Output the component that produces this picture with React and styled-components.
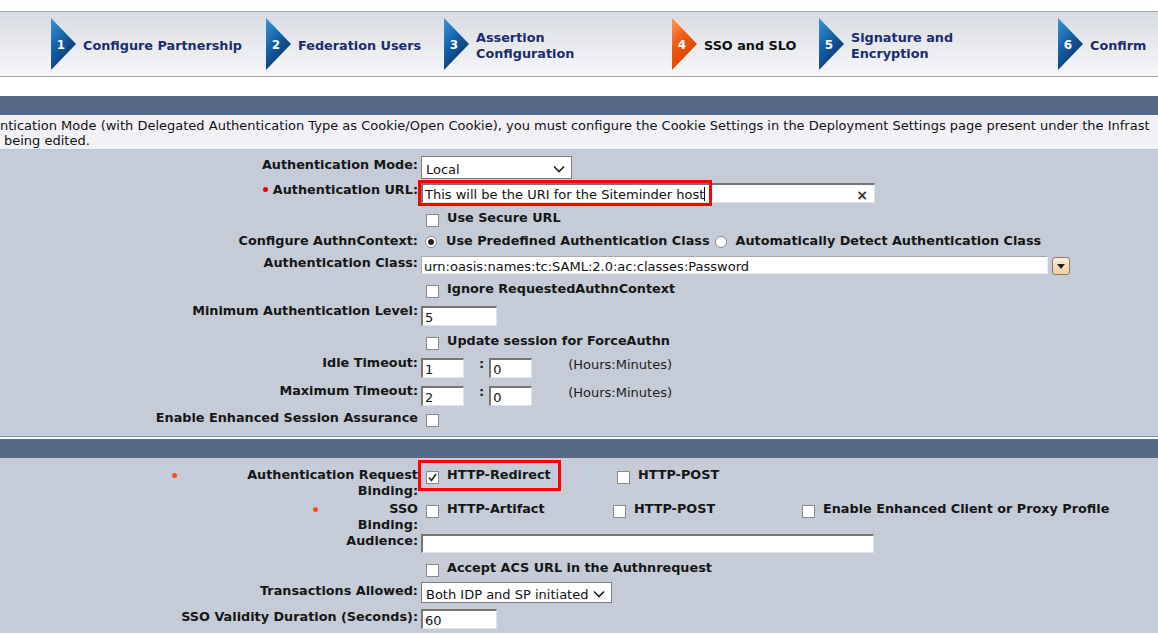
import React from 'react';
import styled, { createGlobalStyle } from 'styled-components';

const GlobalStyle = createGlobalStyle`
  html, body {
    margin: 0;
    padding: 0;
    background: #fff;
    overflow: hidden;
  }
  body {
    font-family: "DejaVu Sans", Verdana, sans-serif;
    font-size: 13px;
    color: #111;
  }
`;

const Page = styled.div`
  width: 1158px;
  height: 635px;
  overflow: hidden;
  padding-top: 11px;
  box-sizing: border-box;
`;

/* ---------- wizard steps ---------- */

const Stepper = styled.div`
  display: flex;
  align-items: center;
  height: 64px;
  padding-left: 51px;
  border-top: 1px solid #a3a7ae;
  border-bottom: 1px solid #a3a7ae;
  background: linear-gradient(#d8dbe2, #f6f7f9);
`;

const Step = styled.div`
  display: flex;
  align-items: center;
  flex-shrink: 0;
  width: ${p => (p.$w ? `${p.$w}px` : 'auto')};
`;

const StepText = styled.div`
  margin-left: 7px;
  padding-top: 4px;
  font-weight: bold;
  font-size: 12.8px;
  line-height: 16px;
  color: ${p => (p.$active ? '#111' : '#1d2b6f')};
`;

const StepArrow = ({ n, active }) => {
  const id = `grad-${n}`;
  return (
    <svg width="25" height="52" viewBox="0 0 25 52">
      <defs>
        <linearGradient id={id} x1="0" y1="0" x2="0.6" y2="1">
          {active ? (
            <>
              <stop offset="0" stopColor="#ff9a55" />
              <stop offset="0.45" stopColor="#f25a12" />
              <stop offset="1" stopColor="#d63a00" />
            </>
          ) : (
            <>
              <stop offset="0" stopColor="#3d95d8" />
              <stop offset="0.45" stopColor="#1565ad" />
              <stop offset="1" stopColor="#082f66" />
            </>
          )}
        </linearGradient>
      </defs>
      <polygon points="0,0 25,26 0,52" fill={`url(#${id})`} />
      <text x="10" y="31" textAnchor="middle" fill="#fff" fontSize="12" fontWeight="bold"
        fontFamily="DejaVu Sans, Verdana, sans-serif">{n}</text>
    </svg>
  );
};

/* ---------- sections ---------- */

const Gap = styled.div`
  height: ${p => p.$h}px;
  background: ${p => p.$bg || '#fff'};
`;

const SectionBar = styled.div`
  height: 19px;
  background: #566a88;
`;

const Info = styled.div`
  height: 35px;
  box-sizing: border-box;
  padding-top: 3px;
  background: #f1f1f6;
  border-bottom: 1px solid #b0c9e6;
  line-height: 15px;
  white-space: nowrap;
  overflow: hidden;
`;

const InfoLine = styled.div`
  padding-left: ${p => p.$indent || 0}px;
`;

const Panel = styled.div`
  background: #c5ccd7;
  padding-top: ${p => p.$pt || 0}px;
  border-bottom: ${p => (p.$divider ? '1px solid #8c929b' : 'none')};
`;

const Row = styled.div`
  display: grid;
  grid-template-columns: 421px 1fr;
  height: ${p => p.$h}px;
`;

const Label = styled.div`
  position: relative;
  box-sizing: border-box;
  padding-right: 3px;
  padding-top: ${p => (p.$pt || 0) + 2}px;
  text-align: right;
  font-weight: bold;
  font-size: 12.8px;
  line-height: 16px;
  color: #161616;
`;

const ReqDot = styled.span`
  display: inline-block;
  width: 5px;
  height: 5px;
  border-radius: 50%;
  background: #e60000;
  margin-right: 5px;
  vertical-align: 2px;
`;

const FarDot = styled.span`
  position: absolute;
  left: ${p => p.$x}px;
  top: ${p => p.$y}px;
  width: 5px;
  height: 5px;
  border-radius: 50%;
  background: #f2501a;
`;

const Field = styled.div`
  position: relative;
  display: flex;
  align-items: flex-start;
`;

const Highlight = styled.div`
  position: absolute;
  left: -3px;
  top: ${p => p.$top}px;
  width: ${p => p.$w}px;
  height: ${p => p.$h}px;
  box-sizing: border-box;
  border: 3px solid #f00;
  pointer-events: none;
`;

const TextBox = styled.div`
  display: flex;
  align-items: center;
  box-sizing: border-box;
  width: ${p => p.$w}px;
  height: ${p => p.$h || 20}px;
  margin-top: ${p => p.$mt || 0}px;
  margin-left: ${p => p.$ml || 0}px;
  padding: 2px 2px 0;
  background: #fff;
  border-style: solid;
  border-width: 2px 1px 1px 2px;
  border-color: #767676 #e2e2e2 #e2e2e2 #767676;
  font-size: 13px;
  white-space: nowrap;
  overflow: hidden;
`;

const FlatBox = styled(TextBox)`
  border-width: 1px;
  border-color: #a9a9a9 #eee #eee #a9a9a9;
`;

const BoxText = styled.span`
  flex: 1;
`;

const Caret = styled.span`
  display: inline-block;
  width: 1px;
  height: 14px;
  background: #111;
  vertical-align: -2px;
`;

const Clear = styled.span`
  margin-right: 4px;
  font-size: 14px;
  font-weight: bold;
  color: #333;
`;

const SelectBox = styled.div`
  display: flex;
  align-items: center;
  justify-content: space-between;
  box-sizing: border-box;
  width: ${p => p.$w}px;
  height: ${p => p.$h || 22}px;
  margin-top: ${p => p.$mt || 0}px;
  padding: 3px 6px 0 4px;
  background: #fff;
  border: 1px solid #7d7d7d;
  font-size: 13px;
  white-space: nowrap;
`;

const Chevron = () => (
  <svg width="12" height="8" viewBox="0 0 12 8">
    <polyline points="1,1.5 6,6.5 11,1.5" fill="none" stroke="#222" strokeWidth="1.6" />
  </svg>
);

const DropButton = styled.div`
  display: flex;
  align-items: center;
  justify-content: center;
  box-sizing: border-box;
  width: 18px;
  height: 18px;
  margin: 5px 0 0 4px;
  border: 1px solid #8b7b66;
  border-radius: 3px;
  background: linear-gradient(#fbeed8, #ead0a6);
`;

const Check = styled.span`
  display: inline-flex;
  align-items: center;
  justify-content: center;
  flex-shrink: 0;
  box-sizing: border-box;
  width: 13px;
  height: 13px;
  margin-top: ${p => p.$mt ?? 6}px;
  margin-left: ${p => p.$ml ?? 5}px;
  background: #fff;
  border: 1px solid #8a8a8a;
`;

const Radio = styled.span`
  display: inline-flex;
  align-items: center;
  justify-content: center;
  flex-shrink: 0;
  box-sizing: border-box;
  width: 12px;
  height: 12px;
  margin-top: 6px;
  margin-left: ${p => p.$ml ?? 4}px;
  border-radius: 50%;
  background: #fff;
  border: 1px solid #8a8a8a;
  &::after {
    content: '';
    display: ${p => (p.$on ? 'block' : 'none')};
    width: 6px;
    height: 6px;
    border-radius: 50%;
    background: #222;
  }
`;

const Opt = styled.div`
  display: flex;
  align-items: flex-start;
  flex-shrink: 0;
  width: ${p => (p.$w ? `${p.$w}px` : 'auto')};
`;

const OptText = styled.span`
  margin-left: ${p => p.$ml ?? 8}px;
  margin-top: ${p => (p.$mt || 0) + 2}px;
  font-weight: bold;
  font-size: 12.8px;
  line-height: 16px;
  white-space: nowrap;
  color: #161616;
`;

const Plain = styled.span`
  margin-left: ${p => p.$ml || 0}px;
  margin-top: ${p => (p.$mt || 0) + 2}px;
  line-height: 16px;
  font-weight: ${p => (p.$bold ? 'bold' : 'normal')};
  color: #222;
`;

const Tick = () => (
  <svg width="9" height="9" viewBox="0 0 9 9">
    <polyline points="1,4.5 3.5,7.5 8,1" fill="none" stroke="#222" strokeWidth="1.6" />
  </svg>
);

const CheckOpt = ({ w, checked, pt = 0, children }) => (
  <Opt $w={w}>
    <Check $mt={pt + 6}>{checked && <Tick />}</Check>
    <OptText $mt={pt}>{children}</OptText>
  </Opt>
);

const steps = [
  { n: 1, w: 215, lines: ['Configure Partnership'] },
  { n: 2, w: 178, lines: ['Federation Users'] },
  { n: 3, w: 228, lines: ['Assertion', 'Configuration'] },
  { n: 4, w: 147, lines: ['SSO and SLO'], active: true },
  { n: 5, w: 239, lines: ['Signature and', 'Encryption'] },
  { n: 6, lines: ['Confirm'] },
];

const App = () => (
  <Page>
    <GlobalStyle />
    <Stepper>
      {steps.map(s => (
        <Step key={s.n} $w={s.w}>
          <StepArrow n={s.n} active={s.active} />
          <StepText $active={s.active}>
            {s.lines.map(l => <div key={l}>{l}</div>)}
          </StepText>
        </Step>
      ))}
    </Stepper>

    <Gap $h={19} />
    <SectionBar />
    <Info>
      <InfoLine>ntication Mode (with Delegated Authentication Type as Cookie/Open Cookie), you must configure the Cookie Settings in the Deployment Settings page present under the Infrast</InfoLine>
      <InfoLine $indent={4}>being edited.</InfoLine>
    </Info>

    <Panel $pt={4} $divider>
      <Row $h={26}>
        <Label $pt={1}>Authentication Mode:</Label>
        <Field>
          <SelectBox $w={151} $h={23} $mt={2}>
            <span>Local</span>
            <Chevron />
          </SelectBox>
        </Field>
      </Row>
      <Row $h={26}>
        <Label $pt={0}><ReqDot />Authentication URL:</Label>
        <Field>
          <TextBox $w={454} $mt={3}>
            <BoxText>This will be the URI for the Siteminder host<Caret /></BoxText>
            <Clear>×</Clear>
          </TextBox>
          <Highlight $top={0} $w={294} $h={26} />
        </Field>
      </Row>
      <Row $h={24}>
        <Label />
        <Field><CheckOpt pt={2}>Use Secure URL</CheckOpt></Field>
      </Row>
      <Row $h={22}>
        <Label $pt={1}>Configure AuthnContext:</Label>
        <Field>
          <Opt>
            <Radio $on />
            <OptText $ml={9} $mt={1}>Use Predefined Authentication Class</OptText>
          </Opt>
          <Opt>
            <Radio $ml={5} />
            <OptText $ml={9} $mt={1}>Automatically Detect Authentication Class</OptText>
          </Opt>
        </Field>
      </Row>
      <Row $h={25}>
        <Label $pt={1}>Authentication Class:</Label>
        <Field>
          <FlatBox $w={627} $h={18} $mt={4}>
            <BoxText>urn:oasis:names:tc:SAML:2.0:ac:classes:Password</BoxText>
          </FlatBox>
          <DropButton>
            <svg width="8" height="5" viewBox="0 0 8 5"><polygon points="0,0 8,0 4,5" fill="#222" /></svg>
          </DropButton>
        </Field>
      </Row>
      <Row $h={24}>
        <Label />
        <Field><CheckOpt pt={2}>Ignore RequestedAuthnContext</CheckOpt></Field>
      </Row>
      <Row $h={28}>
        <Label $pt={0}>Minimum Authentication Level:</Label>
        <Field>
          <TextBox $w={76} $mt={5}>5</TextBox>
        </Field>
      </Row>
      <Row $h={22}>
        <Label />
        <Field><CheckOpt pt={2}>Update session for ForceAuthn</CheckOpt></Field>
      </Row>
      <Row $h={29}>
        <Label $pt={2}>Idle Timeout:</Label>
        <Field>
          <TextBox $w={43} $mt={7}>1</TextBox>
          <Plain $bold $ml={15} $mt={3}>:</Plain>
          <TextBox $w={43} $mt={7} $ml={5}>0</TextBox>
          <Plain $ml={36} $mt={4}>(Hours:Minutes)</Plain>
        </Field>
      </Row>
      <Row $h={26}>
        <Label $pt={1}>Maximum Timeout:</Label>
        <Field>
          <TextBox $w={43} $mt={6}>2</TextBox>
          <Plain $bold $ml={15} $mt={2}>:</Plain>
          <TextBox $w={43} $mt={6} $ml={5}>0</TextBox>
          <Plain $ml={36} $mt={3}>(Hours:Minutes)</Plain>
        </Field>
      </Row>
      <Row $h={30}>
        <Label $pt={2}>Enable Enhanced Session Assurance</Label>
        <Field>
          <Check $mt={8} $ml={5} />
        </Field>
      </Row>
    </Panel>

    <Gap $h={2} />
    <SectionBar />

    <Panel $pt={1}>
      <Row $h={37}>
        <Label $pt={6}>
          <FarDot $x={172} $y={14} />
          Authentication Request<br />Binding:
        </Label>
        <Field>
          <CheckOpt w={191} checked pt={6}>HTTP-Redirect</CheckOpt>
          <CheckOpt pt={6}>HTTP-POST</CheckOpt>
          <Highlight $top={1} $w={143} $h={31} />
        </Field>
      </Row>
      <Row $h={35}>
        <Label $pt={3}>
          <FarDot $x={313} $y={11} />
          SSO<br />Binding:
        </Label>
        <Field>
          <CheckOpt w={187} pt={3}>HTTP-Artifact</CheckOpt>
          <CheckOpt w={189} pt={3}>HTTP-POST</CheckOpt>
          <CheckOpt pt={3}>Enable Enhanced Client or Proxy Profile</CheckOpt>
        </Field>
      </Row>
      <Row $h={24}>
        <Label $pt={0}>Audience:</Label>
        <Field>
          <TextBox $w={453} $h={19} $mt={3} />
        </Field>
      </Row>
      <Row $h={24}>
        <Label />
        <Field><CheckOpt pt={3}>Accept ACS URL in the Authnrequest</CheckOpt></Field>
      </Row>
      <Row $h={26}>
        <Label $pt={2}>Transactions Allowed:</Label>
        <Field>
          <SelectBox $w={191} $h={21} $mt={3}>
            <span>Both IDP and SP initiated</span>
            <Chevron />
          </SelectBox>
        </Field>
      </Row>
      <Row $h={28}>
        <Label $pt={2}>SSO Validity Duration (Seconds):</Label>
        <Field>
          <TextBox $w={76} $mt={4}>60</TextBox>
        </Field>
      </Row>
    </Panel>
  </Page>
);

export default App;
